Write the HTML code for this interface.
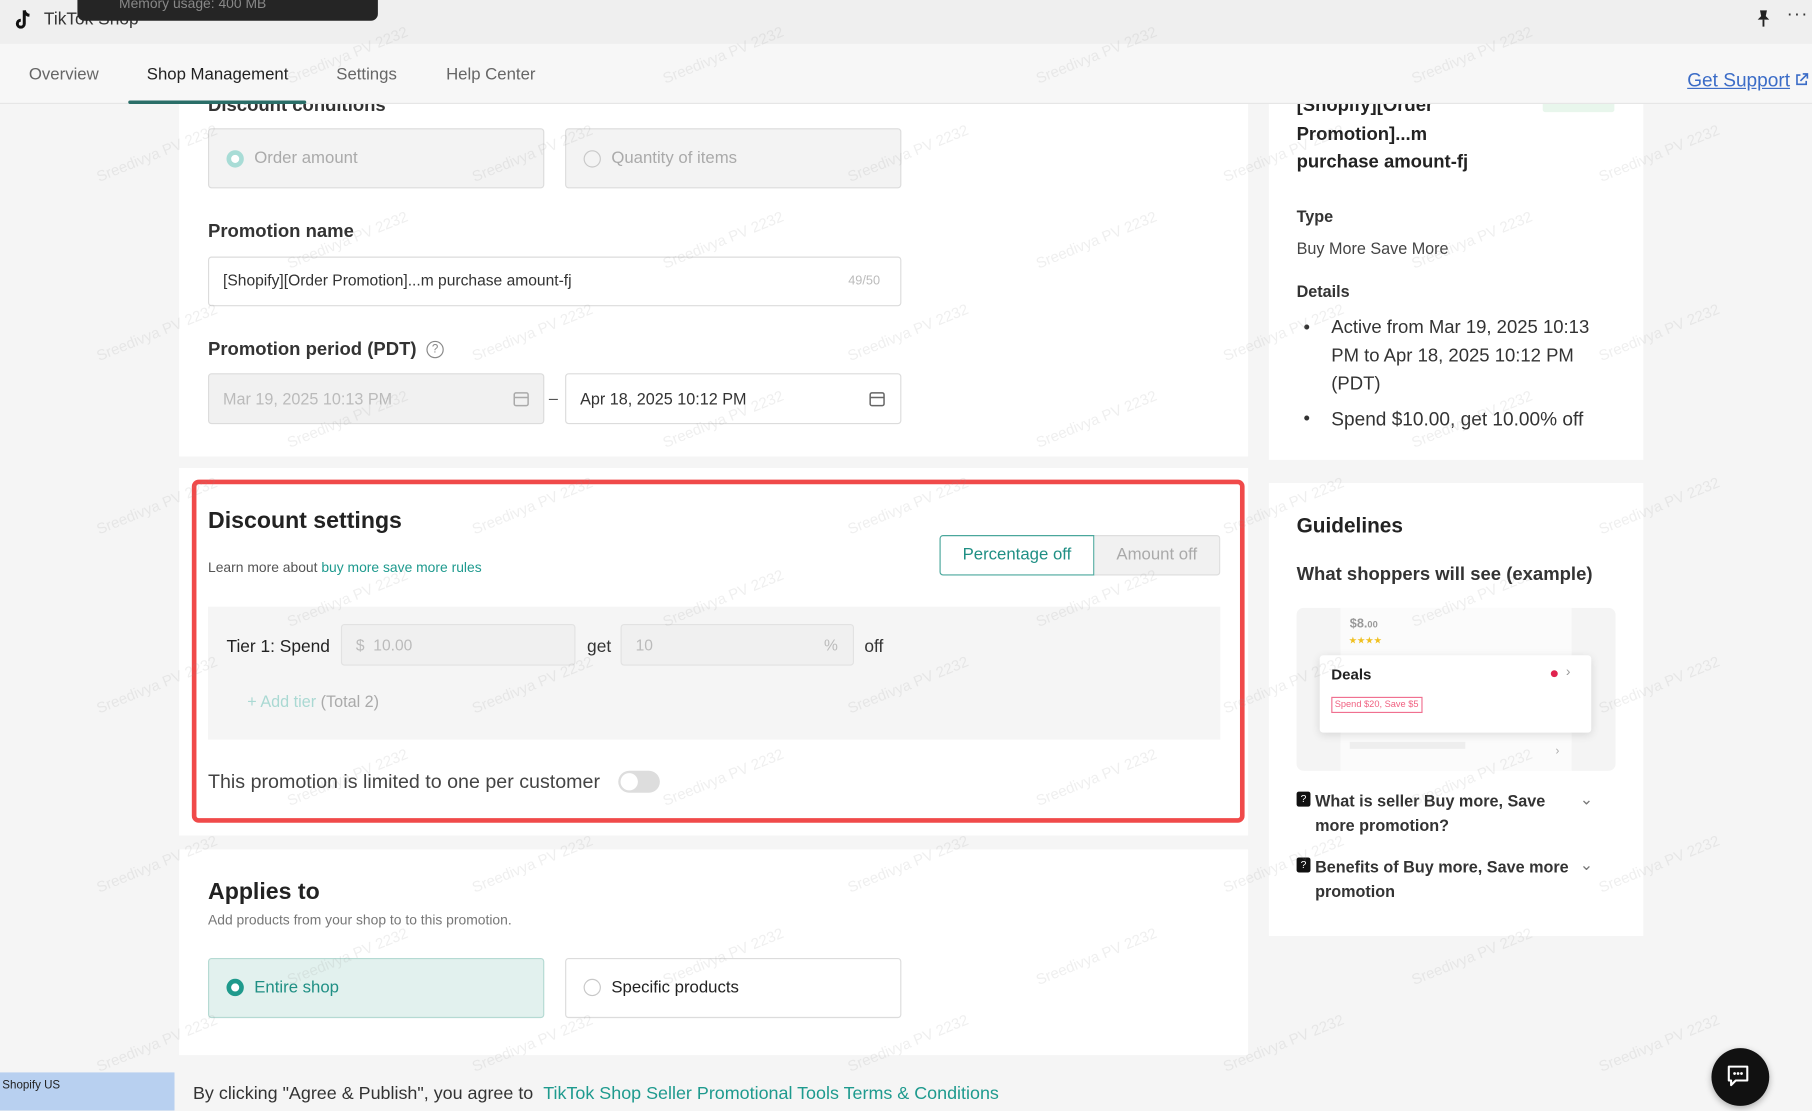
<!DOCTYPE html>
<html><head><meta charset="utf-8">
<style>
*{box-sizing:border-box;margin:0;padding:0}
html,body{width:1812px;height:1110px;overflow:hidden;background:#f5f5f5;font-family:"Liberation Sans",Arial,sans-serif;color:#222}
#w{position:absolute;left:0;top:0;width:1568px;height:961px;transform:scale(1.15561);transform-origin:0 0;background:#f5f5f5}
.a{position:absolute}
.z{z-index:5}
.card{position:absolute;background:#fff}
.box{position:absolute;border:1px solid #dcdcdc;border-radius:3px}
.rad{position:absolute;width:15px;height:15px;border-radius:50%;border:1.5px solid #c8c8c8;background:#fff}
.wm{position:absolute;color:rgba(150,150,150,.15);font-size:13px;transform:rotate(-22deg);white-space:nowrap;z-index:6}
.b{font-weight:bold}
</style></head><body><div id="w">
<!-- top bar -->
<div class="a z" style="left:0;top:0;width:1568px;height:38px;background:#efefef"></div>
<svg class="a z" style="left:10px;top:7px" width="20" height="20" viewBox="0 0 20 20"><path d="M11 2v11.5a3 3 0 1 1-3-3" fill="none" stroke="#111" stroke-width="2.6"/><path d="M11 2c.5 2.5 2 4 4.5 4.2" fill="none" stroke="#111" stroke-width="2.6"/></svg>
<div class="a z" style="left:38px;top:8px;font-size:15px;color:#333">TikTok Shop</div>
<div class="a z" style="left:67px;top:-6px;width:260px;height:24px;background:#252525;border-radius:6px"></div>
<div class="a z" style="left:103px;top:-4px;font-size:12px;color:#888">Memory usage: 400 MB</div>
<svg class="a z" style="left:1519px;top:8px" width="14" height="16" viewBox="0 0 14 16"><path d="M4 1h6l-1 5 3 3H2l3-3z" fill="#222"/><path d="M7 9v6" stroke="#222" stroke-width="1.6"/></svg>
<div class="a z" style="left:1546px;top:4px;font-size:16px;color:#333;letter-spacing:1px">···</div>
<!-- nav -->
<div class="a z" style="left:0;top:38px;width:1568px;height:52px;background:#f7f7f7;border-bottom:1px solid #e6e6e6"></div>
<div class="a z" style="left:25px;top:57px;font-size:14.5px;color:#666">Overview</div>
<div class="a z" style="left:127px;top:57px;font-size:14.5px;color:#222">Shop Management</div>
<div class="a z" style="left:291px;top:57px;font-size:14.5px;color:#666">Settings</div>
<div class="a z" style="left:386px;top:57px;font-size:14.5px;color:#666">Help Center</div>
<div class="a z" style="left:111px;top:87px;width:154px;height:3px;background:#2a6e68;border-radius:2px"></div>
<div class="a z" style="left:1460px;top:61px;font-size:16.5px;color:#3b6cc7;text-decoration:underline">Get Support</div>
<svg class="a z" style="left:1553px;top:63px" width="12" height="12" viewBox="0 0 12 12"><path d="M5 2H2v8h8V7M7 1h4v4M11 1 5 7" fill="none" stroke="#3b6cc7" stroke-width="1.4"/></svg>

<!-- left card 1 -->
<div class="card" style="left:155px;top:80px;width:925px;height:315px"></div>
<div class="a b" style="left:180px;top:83px;font-size:16px;color:#333">Discount conditions</div>
<div class="box" style="left:180px;top:111px;width:291px;height:52px;background:#f3f3f3"></div>
<div class="rad" style="left:196px;top:130px;border:4px solid #a8dcd6"></div>
<div class="a" style="left:220px;top:129px;font-size:14.5px;color:#aaa">Order amount</div>
<div class="box" style="left:489px;top:111px;width:291px;height:52px;background:#f3f3f3"></div>
<div class="rad" style="left:505px;top:130px;background:#f3f3f3"></div>
<div class="a" style="left:529px;top:129px;font-size:14.5px;color:#aaa">Quantity of items</div>
<div class="a b" style="left:180px;top:192px;font-size:16px;color:#333">Promotion name</div>
<div class="box" style="left:180px;top:222px;width:600px;height:43px;background:#fff"></div>
<div class="a" style="left:193px;top:235px;font-size:13.5px;color:#333">[Shopify][Order Promotion]...m purchase amount-fj</div>
<div class="a" style="left:734px;top:237px;font-size:11px;color:#bbb">49/50</div>
<div class="a b" style="left:180px;top:294px;font-size:16px;color:#333">Promotion period (PDT)</div>
<div class="a" style="left:369px;top:295px;width:15px;height:15px;border:1.3px solid #888;border-radius:50%;font-size:10px;color:#888;text-align:center;line-height:13px">?</div>
<div class="box" style="left:180px;top:323px;width:291px;height:44px;background:#f1f1f1"></div>
<div class="a" style="left:193px;top:337px;font-size:14px;color:#bbb">Mar 19, 2025 10:13 PM</div>
<svg class="a" style="left:444px;top:338px" width="14" height="14" viewBox="0 0 14 14"><rect x="1" y="2" width="12" height="11" rx="1.5" fill="none" stroke="#aaa" stroke-width="1.3"/><path d="M1 6h12" stroke="#aaa" stroke-width="1.3"/></svg>
<div class="a" style="left:475px;top:336px;font-size:14px;color:#555">–</div>
<div class="box" style="left:489px;top:323px;width:291px;height:44px;background:#fff"></div>
<div class="a" style="left:502px;top:337px;font-size:14px;color:#333">Apr 18, 2025 10:12 PM</div>
<svg class="a" style="left:752px;top:338px" width="14" height="14" viewBox="0 0 14 14"><rect x="1" y="2" width="12" height="11" rx="1.5" fill="none" stroke="#666" stroke-width="1.3"/><path d="M1 6h12" stroke="#666" stroke-width="1.3"/></svg>

<!-- discount settings card -->
<div class="card" style="left:155px;top:405px;width:925px;height:318px"></div>
<div class="a" style="left:166px;top:415px;width:911px;height:297px;border:4px solid #f04a4a;border-radius:6px"></div>
<div class="a b" style="left:180px;top:440px;font-size:20px;color:#222">Discount settings</div>
<div class="a" style="left:180px;top:484px;font-size:12px;color:#555">Learn more about <span style="color:#1e9a8e">buy more save more rules</span></div>
<div class="a" style="left:813px;top:463px;width:134px;height:35px;border:1.5px solid #4aa79c;border-radius:3px 0 0 3px;background:#fff;color:#1f8f84;font-size:14.5px;text-align:center;line-height:32px">Percentage off</div>
<div class="a" style="left:947px;top:463px;width:109px;height:35px;border:1px solid #ddd;border-left:none;border-radius:0 3px 3px 0;background:#f1f1f1;color:#aaa;font-size:14.5px;text-align:center;line-height:33px">Amount off</div>
<div class="a" style="left:180px;top:525px;width:876px;height:115px;background:#f5f5f5"></div>
<div class="a" style="left:196px;top:551px;font-size:15px;color:#222">Tier 1: Spend</div>
<div class="box" style="left:295px;top:540px;width:203px;height:36px;background:#f0f0f0;border-color:#e2e2e2"></div>
<div class="a" style="left:308px;top:551px;font-size:13.5px;color:#bbb">$ &nbsp;10.00</div>
<div class="a" style="left:508px;top:551px;font-size:15px;color:#333">get</div>
<div class="box" style="left:537px;top:540px;width:202px;height:36px;background:#f0f0f0;border-color:#e2e2e2"></div>
<div class="a" style="left:550px;top:551px;font-size:13.5px;color:#bbb">10</div>
<div class="a" style="left:713px;top:551px;font-size:13.5px;color:#bbb">%</div>
<div class="a" style="left:748px;top:551px;font-size:15px;color:#333">off</div>
<div class="a" style="left:214px;top:599px;font-size:14px;color:#aad9d3">+ Add tier <span style="color:#aaa">(Total 2)</span></div>
<div class="a" style="left:180px;top:667px;font-size:17px;color:#444">This promotion is limited to one per customer</div>
<div class="a" style="left:535px;top:667px;width:36px;height:19px;border-radius:10px;background:#ddd"></div>
<div class="a" style="left:537px;top:669px;width:15px;height:15px;border-radius:50%;background:#fff"></div>

<!-- applies to card -->
<div class="card" style="left:155px;top:735px;width:925px;height:178px"></div>
<div class="a b" style="left:180px;top:761px;font-size:20px;color:#222">Applies to</div>
<div class="a" style="left:180px;top:789px;font-size:12px;color:#777">Add products from your shop to to this promotion.</div>
<div class="box" style="left:180px;top:829px;width:291px;height:52px;background:#e2f1ee;border-color:#b5dad3"></div>
<div class="rad" style="left:196px;top:847px;border:4px solid #1f9a8c"></div>
<div class="a" style="left:220px;top:847px;font-size:14.5px;color:#1f8f84">Entire shop</div>
<div class="box" style="left:489px;top:829px;width:291px;height:52px;background:#fff"></div>
<div class="rad" style="left:505px;top:847px"></div>
<div class="a" style="left:529px;top:847px;font-size:14.5px;color:#222">Specific products</div>

<!-- bottom -->
<div class="a" style="left:0;top:928px;width:151px;height:33px;background:#b8d0f0"></div>
<div class="a" style="left:2px;top:934px;font-size:10px;color:#222">Shopify US</div>
<div class="a" style="left:167px;top:938px;font-size:15.5px;color:#333">By clicking "Agree &amp; Publish", you agree to &nbsp;<span style="color:#1e9a8e">TikTok Shop Seller Promotional Tools Terms &amp; Conditions</span></div>
<div class="a" style="left:1481px;top:907px;width:50px;height:50px;border-radius:50%;background:#111;box-shadow:0 2px 6px rgba(0,0,0,.3)"></div>
<svg class="a" style="left:1493px;top:920px" width="26" height="24" viewBox="0 0 26 24"><path d="M3 3h16v12H9l-4 4v-4H3z" fill="none" stroke="#fff" stroke-width="1.8" stroke-linejoin="round"/><circle cx="8" cy="9" r="1.2" fill="#fff"/><circle cx="11" cy="9" r="1.2" fill="#fff"/><circle cx="14" cy="9" r="1.2" fill="#fff"/></svg>

<!-- right card 1 -->
<div class="card" style="left:1098px;top:80px;width:324px;height:318px"></div>
<div class="a b" style="left:1122px;top:80px;font-size:16px;color:#222;line-height:24.5px">[Shopify][Order<br>Promotion]...m<br>purchase amount-fj</div>
<div class="a" style="left:1335px;top:80px;width:62px;height:17px;background:#e8f6ec;border-radius:2px"></div>
<div class="a b" style="left:1122px;top:179px;font-size:14px;color:#333">Type</div>
<div class="a" style="left:1122px;top:207px;font-size:14px;color:#444">Buy More Save More</div>
<div class="a b" style="left:1122px;top:244px;font-size:14px;color:#333">Details</div>
<div class="a" style="left:1128px;top:272px;font-size:16px;color:#333;line-height:24.5px">•</div>
<div class="a" style="left:1152px;top:272px;width:240px;font-size:16px;color:#333;line-height:24.5px">Active from Mar 19, 2025 10:13 PM to Apr 18, 2025 10:12 PM (PDT)</div>
<div class="a" style="left:1128px;top:354px;font-size:16px;color:#333">•</div>
<div class="a" style="left:1152px;top:354px;font-size:16.5px;color:#333">Spend $10.00, get 10.00% off</div>

<!-- guidelines -->
<div class="card" style="left:1098px;top:418px;width:324px;height:392px"></div>
<div class="a b" style="left:1122px;top:445px;font-size:18px;color:#222">Guidelines</div>
<div class="a b" style="left:1122px;top:489px;font-size:16px;color:#333">What shoppers will see (example)</div>
<div class="a" style="left:1122px;top:526px;width:276px;height:141px;background:#f4f4f4;border-radius:6px"></div>
<div class="a" style="left:1160px;top:526px;width:200px;height:141px;background:#fbfbfb"></div>
<div class="a b" style="left:1168px;top:534px;font-size:11px;color:#999">$8.<span style="font-size:8px">00</span></div>
<div class="a" style="left:1167px;top:550px;font-size:8px;color:#f0c020">★★★★</div>
<div class="a" style="left:1142px;top:567px;width:235px;height:67px;background:#fff;box-shadow:0 2px 8px rgba(0,0,0,.12);border-radius:3px"></div>
<div class="a b" style="left:1152px;top:576px;font-size:13px;color:#222">Deals</div>
<div class="a" style="left:1342px;top:580px;width:6px;height:6px;border-radius:50%;background:#e0234e"></div>
<div class="a" style="left:1355px;top:574px;font-size:12px;color:#999">›</div>
<div class="a" style="left:1152px;top:603px;padding:0 2px;border:1px solid #f07090;font-size:8px;color:#f06080;line-height:12px">Spend $20, Save $5</div>
<div class="a" style="left:1168px;top:642px;width:100px;height:6px;background:#eee"></div>
<div class="a" style="left:1346px;top:645px;font-size:10px;color:#aaa">›</div>
<div class="a" style="left:1122px;top:685px;width:12px;height:13px;background:#111;border-radius:2px;color:#fff;font-size:9px;text-align:center;line-height:13px">?</div>
<div class="a b" style="left:1138px;top:683px;width:225px;font-size:14px;color:#333;line-height:20.5px">What is seller Buy more, Save more promotion?</div>
<div class="a" style="left:1367px;top:683px;font-size:14px;color:#777">⌄</div>
<div class="a" style="left:1122px;top:742px;width:12px;height:13px;background:#111;border-radius:2px;color:#fff;font-size:9px;text-align:center;line-height:13px">?</div>
<div class="a b" style="left:1138px;top:740px;width:225px;font-size:14px;color:#333;line-height:20.5px">Benefits of Buy more, Save more promotion</div>
<div class="a" style="left:1367px;top:740px;font-size:14px;color:#777">⌄</div>

<!-- watermarks -->
<div class="wm" style="left:245px;top:40px">Sreedivya PV 2232</div><div class="wm" style="left:570px;top:40px">Sreedivya PV 2232</div><div class="wm" style="left:893px;top:40px">Sreedivya PV 2232</div><div class="wm" style="left:1218px;top:40px">Sreedivya PV 2232</div>
<div class="wm" style="left:80px;top:125px">Sreedivya PV 2232</div><div class="wm" style="left:405px;top:125px">Sreedivya PV 2232</div><div class="wm" style="left:730px;top:125px">Sreedivya PV 2232</div><div class="wm" style="left:1055px;top:125px">Sreedivya PV 2232</div><div class="wm" style="left:1380px;top:125px">Sreedivya PV 2232</div>
<div class="wm" style="left:245px;top:200px">Sreedivya PV 2232</div><div class="wm" style="left:570px;top:200px">Sreedivya PV 2232</div><div class="wm" style="left:893px;top:200px">Sreedivya PV 2232</div><div class="wm" style="left:1218px;top:200px">Sreedivya PV 2232</div>
<div class="wm" style="left:80px;top:280px">Sreedivya PV 2232</div><div class="wm" style="left:405px;top:280px">Sreedivya PV 2232</div><div class="wm" style="left:730px;top:280px">Sreedivya PV 2232</div><div class="wm" style="left:1055px;top:280px">Sreedivya PV 2232</div><div class="wm" style="left:1380px;top:280px">Sreedivya PV 2232</div>
<div class="wm" style="left:245px;top:355px">Sreedivya PV 2232</div><div class="wm" style="left:570px;top:355px">Sreedivya PV 2232</div><div class="wm" style="left:893px;top:355px">Sreedivya PV 2232</div><div class="wm" style="left:1218px;top:355px">Sreedivya PV 2232</div>
<div class="wm" style="left:80px;top:430px">Sreedivya PV 2232</div><div class="wm" style="left:405px;top:430px">Sreedivya PV 2232</div><div class="wm" style="left:730px;top:430px">Sreedivya PV 2232</div><div class="wm" style="left:1055px;top:430px">Sreedivya PV 2232</div><div class="wm" style="left:1380px;top:430px">Sreedivya PV 2232</div>
<div class="wm" style="left:245px;top:510px">Sreedivya PV 2232</div><div class="wm" style="left:570px;top:510px">Sreedivya PV 2232</div><div class="wm" style="left:893px;top:510px">Sreedivya PV 2232</div><div class="wm" style="left:1218px;top:510px">Sreedivya PV 2232</div>
<div class="wm" style="left:80px;top:585px">Sreedivya PV 2232</div><div class="wm" style="left:405px;top:585px">Sreedivya PV 2232</div><div class="wm" style="left:730px;top:585px">Sreedivya PV 2232</div><div class="wm" style="left:1055px;top:585px">Sreedivya PV 2232</div><div class="wm" style="left:1380px;top:585px">Sreedivya PV 2232</div>
<div class="wm" style="left:245px;top:665px">Sreedivya PV 2232</div><div class="wm" style="left:570px;top:665px">Sreedivya PV 2232</div><div class="wm" style="left:893px;top:665px">Sreedivya PV 2232</div><div class="wm" style="left:1218px;top:665px">Sreedivya PV 2232</div>
<div class="wm" style="left:80px;top:740px">Sreedivya PV 2232</div><div class="wm" style="left:405px;top:740px">Sreedivya PV 2232</div><div class="wm" style="left:730px;top:740px">Sreedivya PV 2232</div><div class="wm" style="left:1055px;top:740px">Sreedivya PV 2232</div><div class="wm" style="left:1380px;top:740px">Sreedivya PV 2232</div>
<div class="wm" style="left:245px;top:820px">Sreedivya PV 2232</div><div class="wm" style="left:570px;top:820px">Sreedivya PV 2232</div><div class="wm" style="left:893px;top:820px">Sreedivya PV 2232</div><div class="wm" style="left:1218px;top:820px">Sreedivya PV 2232</div>
<div class="wm" style="left:80px;top:895px">Sreedivya PV 2232</div><div class="wm" style="left:405px;top:895px">Sreedivya PV 2232</div><div class="wm" style="left:730px;top:895px">Sreedivya PV 2232</div><div class="wm" style="left:1055px;top:895px">Sreedivya PV 2232</div><div class="wm" style="left:1380px;top:895px">Sreedivya PV 2232</div>
</div></body></html>
